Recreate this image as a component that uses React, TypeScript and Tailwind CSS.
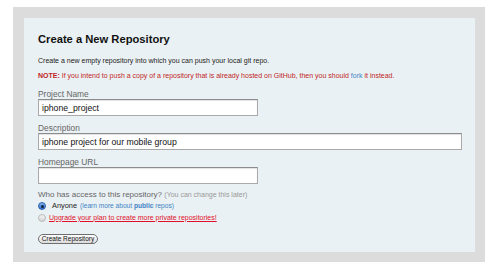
const fieldInput =
  "block h-[17px] border border-[#a9a9a9] border-t-[#8c8c8c] bg-white px-[3px] text-[8.7px] text-[#111] outline-none shadow-[inset_0_1px_1px_rgba(0,0,0,0.12)]";

const Field = ({
  label,
  value,
  width,
}: {
  label: string;
  value: string;
  width: string;
}) => (
  <div className="flex flex-col">
    <label className="text-[8.4px] leading-[10px] text-[#666]">{label}</label>
    <input className={`${fieldInput} ${width}`} defaultValue={value} readOnly />
  </div>
);

export default function App() {
  return (
    <div className="min-h-screen bg-white pl-[13px] pt-[7px] font-['Liberation_Sans',Arial,sans-serif]">
      <div className="w-[472px] bg-[#dcdcdc] pb-[10px] pl-[11px] pr-[10px] pt-[11px]">
        <div className="bg-[#eaf1f4] pb-[8px] pl-[14px] pt-[14px]">
          <h1 className="text-[11.2px] font-bold leading-[14px] text-[#111]">
            Create a New Repository
          </h1>

          <p className="mt-[10px] text-[7px] leading-[10px] text-[#222]">
            Create a new empty repository into which you can push your local
            git repo.
          </p>
          <p className="mt-[5px] text-[7px] leading-[10px] text-[#c01f1f]">
            <span className="font-bold">NOTE:</span> If you intend to push a
            copy of a repository that is already hosted on GitHub, then you
            should{" "}
            <a href="#" className="text-[#4183c4]">
              fork
            </a>{" "}
            it instead.
          </p>

          <div className="mt-[8px] flex flex-col gap-[7px]">
            <Field label="Project Name" value="iphone_project" width="w-[220px]" />
            <Field
              label="Description"
              value="iphone project for our mobile group"
              width="w-[424px]"
            />
            <Field label="Homepage URL" value="" width="w-[220px]" />
          </div>

          <div className="mt-[6px] text-[8px] leading-[10px] text-[#666]">
            Who has access to this repository?{" "}
            <span className="text-[7px] text-[#999]">
              (You can change this later)
            </span>
          </div>

          <div className="flex h-[12px] items-center">
            <span className="flex h-[8px] w-[8px] items-center justify-center rounded-full border border-[#2d5fa8] bg-gradient-to-b from-[#7fb2ee] to-[#2f6fd0]">
              <span className="h-[3px] w-[3px] rounded-full bg-[#10233f]" />
            </span>
            <span className="ml-[6px] text-[7.4px] font-normal text-[#222]">
              Anyone
            </span>
            <span className="ml-[3px] text-[6.6px] text-[#4183c4]">
              (learn more about <span className="font-bold">public</span>{" "}
              repos)
            </span>
          </div>
          <div className="flex h-[12px] items-center">
            <span className="h-[8px] w-[8px] rounded-full border border-[#b9b9b9] bg-gradient-to-b from-[#f4f4f4] to-[#d6d6d6]" />
            <a
              href="#"
              className="ml-[3px] text-[7px] text-[#e0102a] underline"
            >
              Upgrade your plan to create more private repositories!
            </a>
          </div>

          <button className="mt-[10px] flex h-[10px] w-[60px] items-center justify-center rounded-full border border-[#6f6f6f] bg-gradient-to-b from-white to-[#dadada] text-[6.5px] leading-none text-[#111]">
            Create Repository
          </button>
        </div>
      </div>
    </div>
  );
}
